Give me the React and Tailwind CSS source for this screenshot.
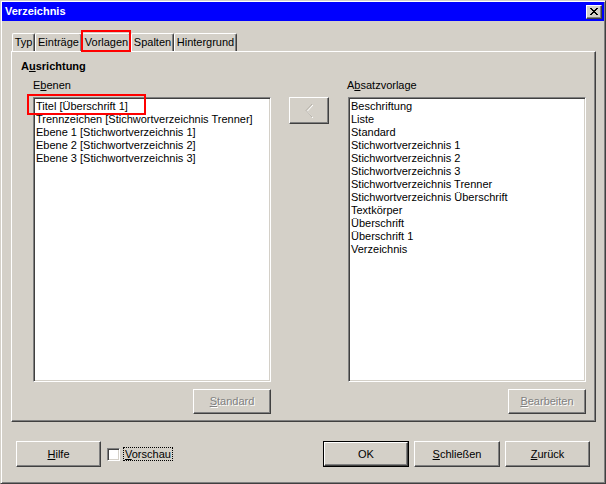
import React from 'react';

const raised =
  'border border-t-white border-l-white border-r-[#404040] border-b-[#404040] shadow-[inset_-1px_-1px_#808080]';
const sunken =
  'border border-t-[#808080] border-l-[#808080] border-r-white border-b-white shadow-[inset_1px_1px_#404040,inset_-1px_-1px_#d4d0c8]';

const Btn = ({ children, className = '', disabled, isDefault }) => (
  <div className={`${isDefault ? 'border border-black' : ''} ${className}`}>
    <div className={`w-full h-full flex items-center justify-center ${raised}`}>
      <span className={disabled ? 'text-[#808080] [text-shadow:1px_1px_0_#fff]' : 'text-black'}>
        {children}
      </span>
    </div>
  </div>
);

const Tab = ({ label, w, selected }) => (
  <div
    className={`relative h-[18px] flex items-center justify-center border-t border-l border-t-white border-l-white border-r border-r-[#404040] rounded-t-[2px] shadow-[inset_-1px_0_#808080] ${w}`}
  >
    {label}
    {selected && (
      <div className="absolute -left-[2px] -right-[1px] -top-[4px] -bottom-[1px] border-2 border-[#ff0000]" />
    )}
  </div>
);

export default function App() {
  const ebenen = [
    'Titel [Überschrift 1]',
    'Trennzeichen [Stichwortverzeichnis Trenner]',
    'Ebene 1 [Stichwortverzeichnis 1]',
    'Ebene 2 [Stichwortverzeichnis 2]',
    'Ebene 3 [Stichwortverzeichnis 3]',
  ];
  const vorlagen = [
    'Beschriftung',
    'Liste',
    'Standard',
    'Stichwortverzeichnis 1',
    'Stichwortverzeichnis 2',
    'Stichwortverzeichnis 3',
    'Stichwortverzeichnis Trenner',
    'Stichwortverzeichnis Überschrift',
    'Textkörper',
    'Überschrift',
    'Überschrift 1',
    'Verzeichnis',
  ];

  return (
    <div className="w-[606px] h-[484px] bg-[#d4d0c8] p-[1px] border border-t-[#d4d0c8] border-l-[#d4d0c8] border-r-[#404040] border-b-[#404040] shadow-[inset_1px_1px_white,inset_-1px_-1px_#808080] font-['Liberation_Sans',Arial,sans-serif] text-[11px] leading-[13px] text-black select-none">
      {/* Title bar */}
      <div className="h-[19px] bg-[#0000ff] flex items-center justify-between pl-[3px] pr-[2px]">
        <span className="text-white font-bold text-[11px]">Verzeichnis</span>
        <div className={`w-[16px] h-[14px] bg-[#d4d0c8] flex items-center justify-center ${raised}`}>
          <svg width="8" height="7" viewBox="0 0 8 7">
            <path d="M0 0 L7 7 M1 0 L8 7 M7 0 L0 7 M8 0 L1 7" stroke="black" strokeWidth="1" />
          </svg>
        </div>
      </div>

      {/* Tabs */}
      <div className="flex mt-[12px] ml-[10px]">
        <Tab label="Typ" w="w-[23px]" />
        <Tab label="Einträge" w="w-[47px]" />
        <Tab label="Vorlagen" w="w-[49px]" selected />
        <Tab label="Spalten" w="w-[43px]" />
        <Tab label="Hintergrund" w="w-[63px]" />
      </div>

      {/* Tab page */}
      <div className="ml-[9px] w-[585px] h-[371px] border border-t-white border-l-white border-r-[#404040] border-b-[#404040] shadow-[inset_-1px_-1px_#808080] pt-[8px] pl-[9px]">
        <div className="font-bold">
          A<span className="underline">u</span>srichtung
        </div>
        <div className="flex mt-[6px] pl-[11px]">
          {/* Left column */}
          <div className="w-[239px] flex flex-col">
            <div className="pl-[1px]">
              E<span className="underline">b</span>enen
            </div>
            <div className={`relative mt-[5px] ml-[1px] h-[285px] bg-white pt-[2px] pl-[2px] ${sunken}`}>
              {ebenen.map((e, i) => (
                <div key={i} className="whitespace-nowrap">{e}</div>
              ))}
              <div className="absolute -left-[7px] top-[-4px] w-[119px] h-[21px] border-2 border-[#ff0000]" />
            </div>
            <div className="flex justify-end mt-[7px]">
              <Btn className="w-[78px] h-[25px]" disabled>
                <span className="underline">S</span>tandard
              </Btn>
            </div>
          </div>

          {/* Arrow button */}
          <div className="ml-[18px] pt-[18px]">
            <div className={`w-[40px] h-[27px] flex items-center justify-center ${raised}`}>
              <svg width="8" height="15" viewBox="0 0 8 15">
                <polyline points="7,1 1,7.5 7,14" fill="none" stroke="white" strokeWidth="1" transform="translate(1,1)" />
                <polyline points="7,1 1,7.5 7,14" fill="none" stroke="#b8b4ac" strokeWidth="1" />
              </svg>
            </div>
          </div>

          {/* Right column */}
          <div className="ml-[18px] w-[239px] flex flex-col">
            <div>
              A<span className="underline">b</span>satzvorlage
            </div>
            <div className={`mt-[5px] ml-[1px] h-[285px] bg-white pt-[2px] pl-[2px] ${sunken}`}>
              {vorlagen.map((v, i) => (
                <div key={i} className="whitespace-nowrap">{v}</div>
              ))}
            </div>
            <div className="flex justify-end mt-[7px]">
              <Btn className="w-[78px] h-[25px]" disabled>
                <span className="underline">B</span>earbeiten
              </Btn>
            </div>
          </div>
        </div>
      </div>

      {/* Bottom buttons */}
      <div className="flex items-center mt-[19px] pl-[14px]">
        <Btn className="w-[85px] h-[26px]">
          <span className="underline">H</span>ilfe
        </Btn>
        <div className={`ml-[6px] w-[13px] h-[13px] bg-white ${sunken}`} />
        <div className="ml-[3px] px-[1px] border border-dotted border-black leading-[12px]">
          <span className="underline">V</span>orschau
        </div>
        <div className="flex-1" />
        <Btn className="w-[86px] h-[26px]" isDefault>OK</Btn>
        <Btn className="ml-[5px] w-[86px] h-[26px]">
          <span className="underline">S</span>chließen
        </Btn>
        <Btn className="ml-[5px] w-[85px] h-[26px] mr-[14px]">
          <span className="underline">Z</span>urück
        </Btn>
      </div>
    </div>
  );
}
